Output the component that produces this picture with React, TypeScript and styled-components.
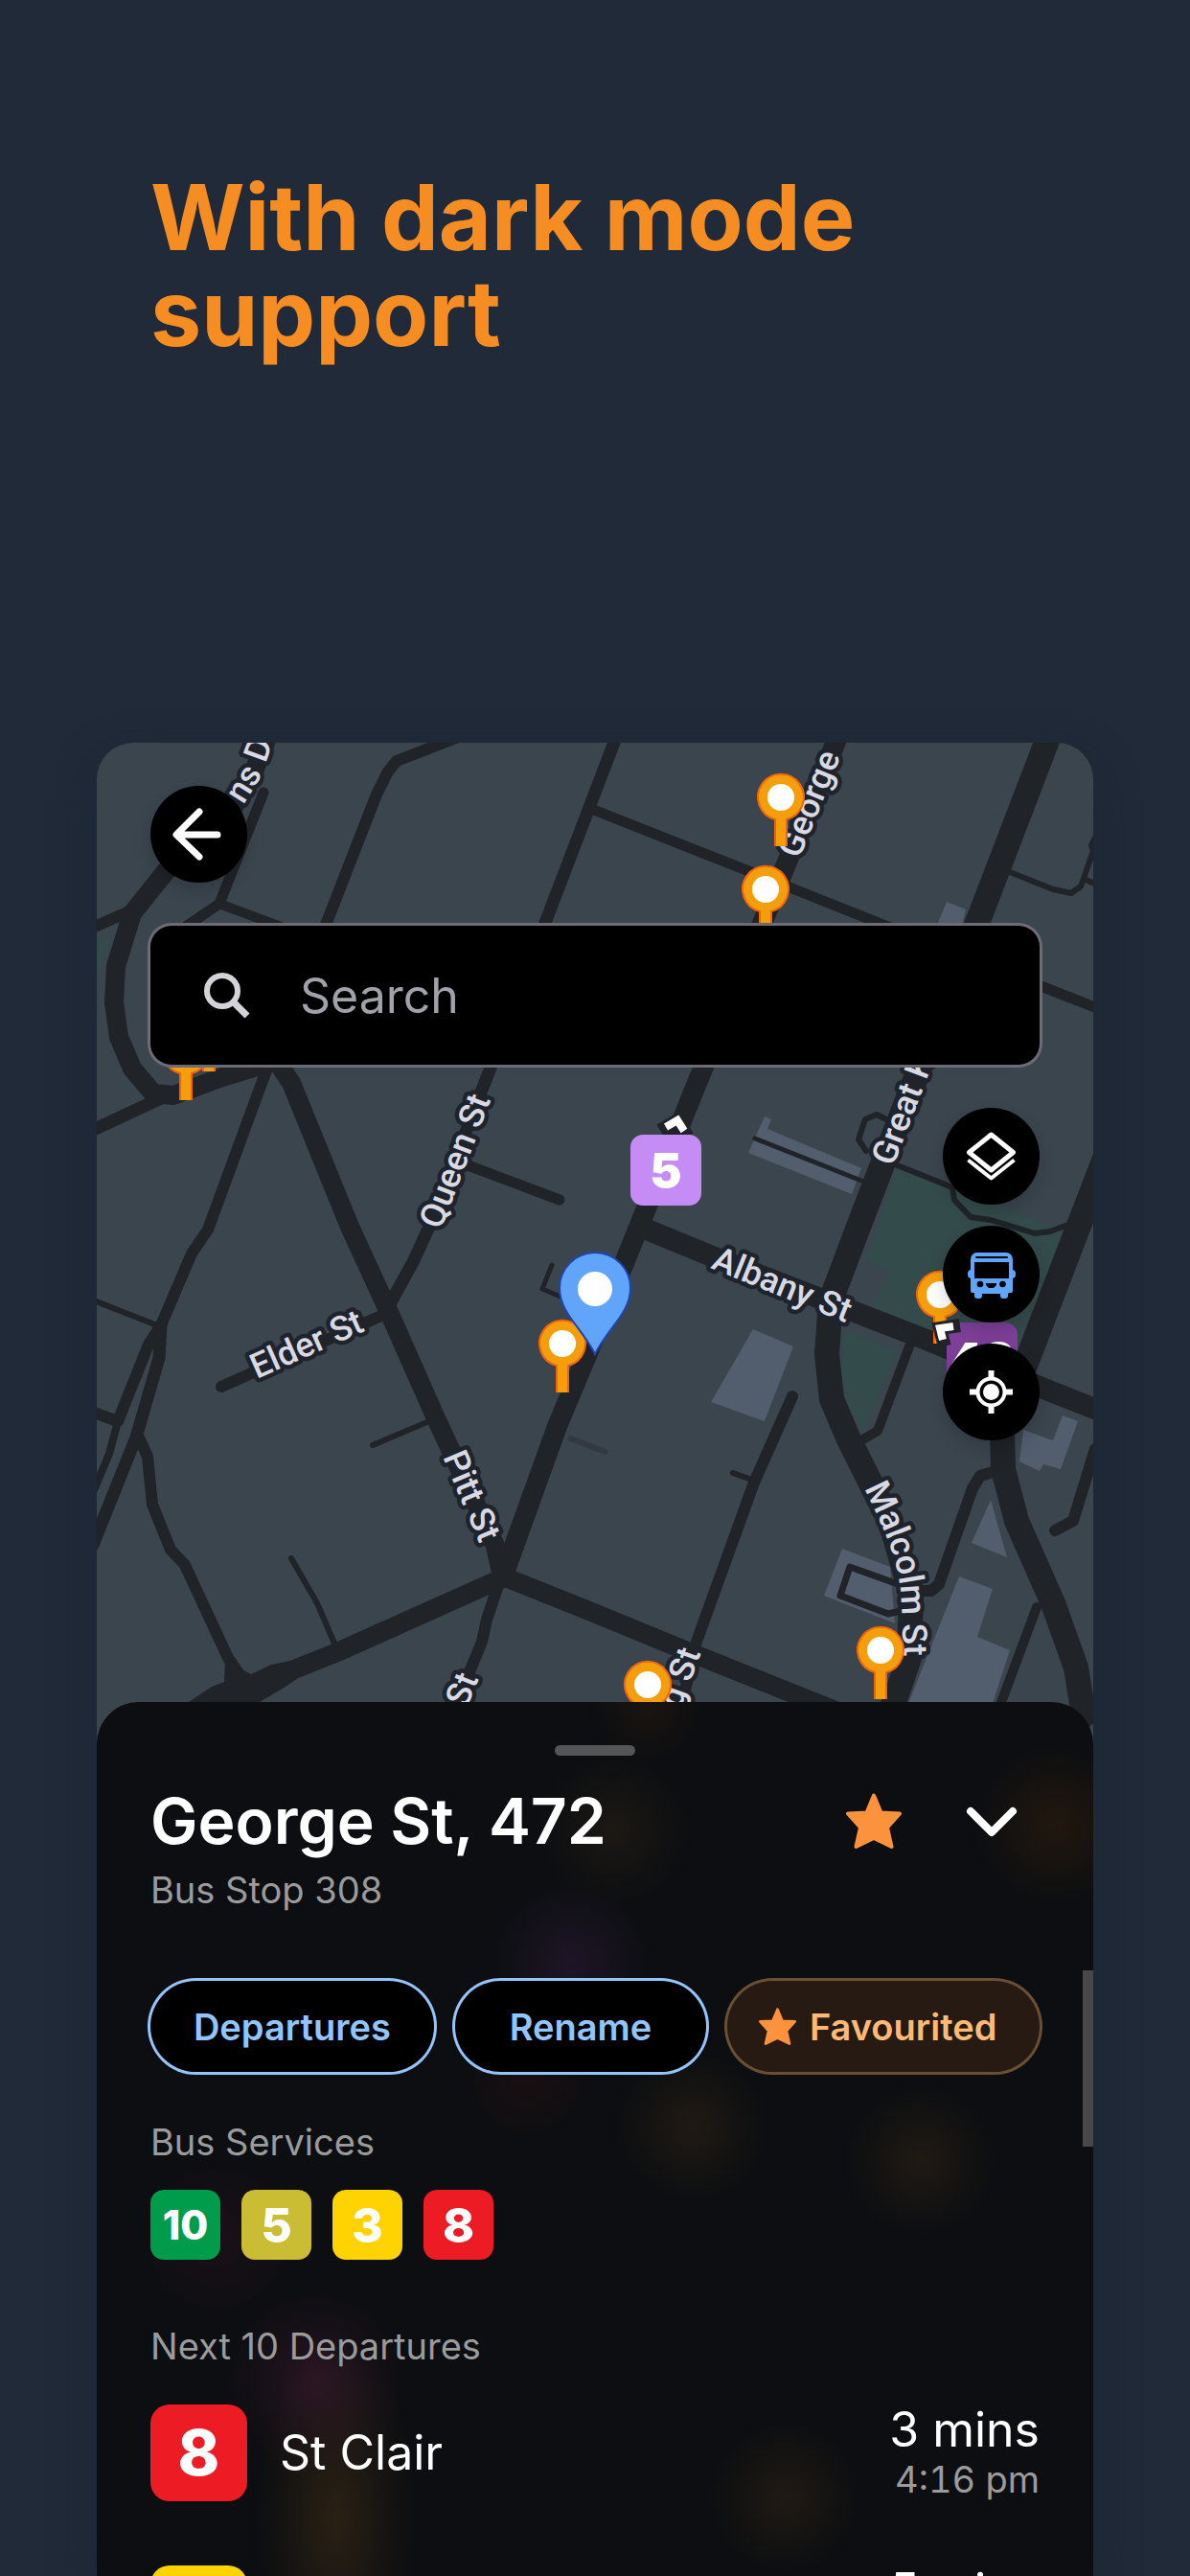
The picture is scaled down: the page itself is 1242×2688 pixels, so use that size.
import React from "react";
import styled, { createGlobalStyle } from "styled-components";

const GlobalStyle = createGlobalStyle`
  *, *::before, *::after { box-sizing: border-box; }
  body { margin: 0; background: #202a38; }
  button, input { font: inherit; color: inherit; }
  h1, h2, h3, p, ul { margin: 0; padding: 0; }
`;

const Page = styled.div`
  height: 100vh;
  overflow: hidden;
  display: flex;
  flex-direction: column;
  padding: 0 101px;
  background: #202a38;
  color: #fff;
  font-family: Inter, "Liberation Sans", sans-serif;
`;

const Hero = styled.header`
  height: 775px;
  flex: none;
  padding: 177px 56px 0;
`;

const Headline = styled.h1`
  max-width: 800px;
  font-size: 95px;
  line-height: 100px;
  font-weight: 700;
  color: #f68d22;
`;

const Card = styled.main`
  position: relative;
  flex: 1;
  min-height: 0;
  display: flex;
  flex-direction: column;
  overflow: hidden;
  border-radius: 38px 38px 0 0;
  background: #3b454e;
`;

const CardShadow = styled.div`
  flex: 1;
  min-height: 0;
  display: flex;
  flex-direction: column;
  border-radius: 38px 38px 0 0;
  box-shadow: 0 16px 48px rgba(22, 38, 50, 0.4);
`;

const MapSvg = styled.svg`
  position: absolute;
  inset: 0;
  width: 100%;
  height: 1040px;
`;

const MapControls = styled.section`
  position: relative;
  flex: none;
  height: 1001px;
  padding: 45px 56px 0;
  display: flex;
  flex-direction: column;
  align-items: flex-start;
`;

const RoundButton = styled.button`
  width: 101px;
  height: 101px;
  flex: none;
  padding: 0;
  border: 0;
  border-radius: 50%;
  background: #000;
  box-shadow: 0 8px 18px rgba(0, 0, 0, 0.16);
  svg { display: block; width: 100%; height: 100%; }
`;

const SearchBox = styled.label`
  width: 100%;
  height: 145px;
  margin-top: 45px;
  padding: 0 50px;
  display: flex;
  align-items: center;
  gap: 46px;
  border-radius: 22px;
  background: #000;
  box-shadow: 0 0 0 3px #6d6b75;
`;

const SearchInput = styled.input`
  flex: 1;
  min-width: 0;
  padding: 0;
  border: 0;
  outline: 0;
  background: transparent;
  font-size: 50px;
  line-height: 60px;
  &::placeholder { color: #a1a1aa; opacity: 1; }
`;

const Tools = styled.div`
  align-self: flex-end;
  margin-top: 45px;
  display: flex;
  flex-direction: column;
  gap: 22px;
`;

const Sheet = styled.section`
  position: relative;
  flex: 1;
  min-height: 0;
  padding: 45px 56px 0;
  border-radius: 44px 44px 0 0;
  background:
    radial-gradient(circle 100px at 228px 708px, rgba(84, 30, 62, 0.4), rgba(84, 30, 62, 0.12) 60%, transparent),
    radial-gradient(ellipse 85px 190px at 250px 850px, rgba(84, 58, 24, 0.42), rgba(84, 58, 24, 0.12) 65%, transparent),
    radial-gradient(circle 80px at 540px 133px, rgba(70, 50, 28, 0.28), transparent),
    radial-gradient(circle 85px at 1000px 128px, rgba(74, 42, 8, 0.34), transparent),
    radial-gradient(circle 85px at 495px 270px, rgba(72, 38, 88, 0.3), transparent),
    radial-gradient(circle 70px at 450px 392px, rgba(110, 20, 20, 0.14), transparent),
    radial-gradient(circle 80px at 621px 443px, rgba(70, 48, 24, 0.34), transparent),
    radial-gradient(circle 80px at 860px 478px, rgba(70, 48, 24, 0.34), transparent),
    radial-gradient(circle 80px at 718px 830px, rgba(70, 48, 24, 0.34), transparent),
    radial-gradient(circle 90px at 125px 560px, rgba(80, 24, 50, 0.22), transparent),
    radial-gradient(circle 60px at 575px 5px, rgba(60, 34, 14, 0.3), transparent),
    #0c0e11;
`;

const Handle = styled.div`
  width: 84px;
  height: 11px;
  margin: 0 auto 32px;
  border-radius: 6px;
  background: #545556;
`;

const SheetHeader = styled.header`
  display: flex;
  align-items: center;
  gap: 22px;
`;

const StopName = styled.h2`
  flex: 1;
  font-size: 66px;
  line-height: 72px;
  font-weight: 600;
  white-space: nowrap;
`;

const IconButton = styled.button`
  width: 101px;
  height: 72px;
  padding: 0;
  border: 0;
  background: transparent;
  display: grid;
  place-items: center;
`;

const Muted = styled.p<{ $top: number }>`
  margin-top: ${(p) => p.$top}px;
  font-size: 38px;
  line-height: 48px;
  font-weight: 400;
  color: #9b9b9c;
`;

const Actions = styled.div`
  display: flex;
  gap: 22px;
  margin-top: 71px;
`;

const Pill = styled.button<{ $grow: number; $active?: boolean }>`
  flex: ${(p) => p.$grow} 1 0;
  height: 95px;
  padding: ${(p) => (p.$active ? "0 12px 0 0" : "0")};
  border: 0;
  border-radius: 48px;
  display: flex;
  align-items: center;
  justify-content: center;
  gap: 14px;
  white-space: nowrap;
  font-size: 38px;
  line-height: 48px;
  font-weight: 600;
  background: ${(p) => (p.$active ? "#261a13" : "#000")};
  color: ${(p) => (p.$active ? "#fdba74" : "#93c5fd")};
  box-shadow: 0 0 0 3px ${(p) => (p.$active ? "#6b4f35" : "#93c5fd")};
`;

const Services = styled.ul`
  display: flex;
  gap: 22px;
  margin-top: 26px;
  list-style: none;
`;

const Route = styled.span<{ $color: string; $large?: boolean; $wide?: boolean }>`
  flex: none;
  width: ${(p) => (p.$large ? 101 : 73)}px;
  height: ${(p) => (p.$large ? 101 : 73)}px;
  display: grid;
  place-items: center;
  border-radius: ${(p) => (p.$large ? 20 : 14)}px;
  background: ${(p) => p.$color};
  font-size: ${(p) => (p.$large ? 66 : p.$wide ? 42 : 50)}px;
  line-height: 1;
  font-weight: 800;
`;

const Departures = styled.ul`
  display: flex;
  flex-direction: column;
  gap: 64px;
  margin-top: 35px;
  list-style: none;
`;

const Departure = styled.li`
  display: flex;
  align-items: center;
  gap: 34px;
`;

const Destination = styled.span`
  flex: 1;
  font-size: 50px;
  line-height: 56px;
`;

const Due = styled.div`
  display: flex;
  flex-direction: column;
  align-items: flex-end;
  min-height: 104px;
`;

const DueIn = styled.span`
  font-size: 50px;
  line-height: 56px;
`;

const DueAt = styled.time`
  font-size: 38px;
  line-height: 48px;
  font-variant-numeric: tabular-nums;
  color: #9b9b9c;
`;

const ScrollThumb = styled.div`
  position: absolute;
  top: 280px;
  right: 0;
  width: 11px;
  height: 184px;
  background: #484848;
`;

const RouteLabel = styled.text`
  font-family: Roboto, sans-serif;
  font-weight: 500;
  font-size: 36px;
  fill: #d9d9e4;
  stroke: #1e232c;
  stroke-width: 9px;
  stroke-linejoin: round;
  paint-order: stroke;
`;

const MarkerText = styled.text`
  font-family: Inter, sans-serif;
  font-weight: 900;
  font-size: 50px;
  fill: #fff;
  text-anchor: middle;
`;

const roads: [number, string][] = [
  [20, "M279 770 262 812 245 840 174 908 138 953 121 1008 119 1046 124 1082 138 1115 160 1141 181 1143 232 1124 285 1108"],
  [12, "M101 966 135 951"],
  [11, "M275 827 229 943 195 966"],
  [10, "M229 943 293 967"],
  [12, "M476 770 414 794 405 805 393 829 340 965"],
  [13, "M642 772 569 963 512 1114 448 1280 431 1317 405 1364"],
  [11, "M617 844 779 908 927 967 1089 1030 1145 1052"],
  [11, "M486 1215 584 1252"],
  [12, "M279 1115 275 1125 217 1283 200 1308 168 1383 155 1403 123 1483"],
  [8, "M123 1483 114 1517 98 1555"],
  [13, "M168 1383 166 1417 142 1500 97 1612"],
  [6, "M98 1357 164 1383"],
  [12, "M95 1473 123 1483"],
  [12, "M145 1500 154 1520 159 1570 178 1617 193 1633 238 1730 256 1756"],
  [20, "M270 1106 290 1109 304 1130 365 1280 405 1367 455 1480 517 1613 524 1645"],
  [13, "M95 1180 168 1146"],
  [12, "M231 1447 400 1372"],
  [6, "M389 1508 448 1483"],
  [6, "M304 1626 331 1673 350 1717"],
  [21, "M874 770 801 950 734 1114 668 1277 613 1413 582 1487 525 1645"],
  [20, "M524 1647 352 1724 307 1742 262 1760 210 1790"],
  [12, "M519 1657 508 1690 503 1713 489 1747 470 1790"],
  [20, "M525 1645 610 1679 727 1727 872 1785"],
  [5, "M576 1320 566 1345 585 1353 590 1336"],
  [26, "M1094 770 1020 963 960 1114 896 1280 867 1357 863 1413 868 1460 885 1500 930 1590 951 1663 949 1730 930 1785"],
  [6, "M1054 910 1099 928 1118 932 1128 925 1141 888 1139 882 1145 870 M1133 918 1145 923"],
  [5, "M788 1188 899 1232"],
  [6, "M925 1168 915 1163 903 1168 896 1189 904 1201"],
  [6, "M934 1215 994 1239 996 1252 1013 1270 1034 1273 1080 1287 1096 1285 1112 1279"],
  [26, "M1158 1196 1124 1284 1068 1430 1046 1493 1047 1533 1061 1587 1099 1673 1123 1740 1131 1790"],
  [22, "M668 1280 748 1313 972 1400 1092 1450 1145 1471"],
  [10, "M949 1405 916 1493 899 1503"],
  [12, "M827 1457 787 1547 727 1713 710 1785"],
  [6, "M765 1537 787 1545"],
  [7, "M937 1653 887 1635 877 1665 927 1684 940 1681"],
  [12, "M1036 1536 1023 1540 1015 1553 980 1653 972 1660 955 1660"],
  [12, "M1143 1512 1120 1587 1101 1597"],
  [10, "M1082 1677 1040 1790"],
];

const buildings = [
  "M988 941 1008 949 1003 970 976 970Z",
  "M798 1165 805 1168 801 1178 899 1219 889 1246 781 1203Z",
  "M786 1387 828 1405 798 1483 742 1463Z",
  "M879 1616 929 1635 934 1694 860 1665Z",
  "M1034 1565 1051 1625 1014 1610Z",
  "M1068 1492 1099 1503 1109 1477 1125 1483 1107 1533 1089 1528 1085 1535 1064 1525Z",
  "M1001 1645 1036 1658 1020 1708 1054 1722 1032 1790 943 1790Z",
];

const parks = [
  "M937 1215 994 1240 1112 1285 1062 1404 1000 1398 909 1364 930 1327 903 1315Z",
  "M882 1388 937 1410 901 1493 885 1470 878 1427Z",
  "M101 982 116 975 101 1022Z",
];

const labels: [string, number, number, number][] = [
  ["ns", 254, 840, -58],
  ["D", 277, 797, -70],
  ["George", 834, 897, -68],
  ["Queen St", 460, 1284, -69],
  ["Elder St", 268, 1439, -24],
  ["Pitt St", 462, 1520, 67],
  ["Albany St", 741, 1323, 22],
  ["Great King St", 932, 1218, -69],
  ["St", 487, 1783, -68],
  ["g St", 710, 1784, -70],
];

const stops = [
  [815, 832],
  [799, 928],
  [218, 1067],
  [194, 1097],
  [587, 1402],
  [981, 1351],
  [919, 1722],
  [676, 1758],
];

function Stop({ x, y }: { x: number; y: number }) {
  return (
    <g transform={`translate(${x} ${y})`}>
      <path d="M-6 51V23A24 24 0 1 1 6 23V51" fill="#f59e0b" stroke="#f0640e" strokeWidth="2" />
      <circle r="14" fill="#fff" />
    </g>
  );
}

function Heading({ d }: { d: string }) {
  return (
    <g fill="none" strokeLinejoin="miter">
      <path d={d} stroke="#202327" strokeWidth="14" strokeLinecap="square" />
      <path d={d} stroke="#fff" strokeWidth="8" />
    </g>
  );
}

function StreetMap() {
  return (
    <MapSvg viewBox="101 775 1040 1040" preserveAspectRatio="xMidYMin slice" aria-hidden="true">
      {parks.map((d) => <path key={d} d={d} fill="#344b4b" />)}
      {buildings.map((d) => <path key={d} d={d} fill="#525d6e" />)}
      <g fill="none" stroke="#202327" strokeLinecap="round" strokeLinejoin="round">
        {roads.map(([w, d]) => <path key={d} d={d} strokeWidth={w} />)}
      </g>
      <path d="M593 1500 634 1516" stroke="#323945" strokeWidth="6" />
      <path d="M235 1733 262 1747 283 1737 303 1733 310 1752 293 1763 271 1776 197 1776 221 1760 234 1755Z" fill="#202327" />
      {labels.map(([t, x, y, r]) => (
        <RouteLabel key={t} transform={`translate(${x} ${y}) rotate(${r})`}>{t}</RouteLabel>
      ))}
      <path id="malcolm" d="M902 1553 C924 1598 941 1632 941 1682 L945 1775" fill="none" />
      <RouteLabel><textPath href="#malcolm">Malcolm St</textPath></RouteLabel>
      {stops.map(([x, y]) => <Stop key={`${x}-${y}`} x={x} y={y} />)}
      <path d="M621 1413 C607 1385 584 1370 584 1344 A37 37 0 0 1 658 1344 C658 1370 635 1385 621 1413Z" fill="#60a5fa" stroke="#2145b0" strokeWidth="2" />
      <circle cx="621" cy="1345" r="18" fill="#fff" />
      <Heading d="M695 1176 707 1169 714 1180" />
      <rect x="658" y="1184" width="74" height="74" rx="13" fill="#c58cf5" />
      <MarkerText x="695" y="1239">5</MarkerText>
      <rect x="988" y="1380" width="74" height="74" rx="13" fill="#7e3f98" />
      <MarkerText x="1025" y="1437">43</MarkerText>
      <Heading d="M984 1398 981 1386 995 1384" />
    </MapSvg>
  );
}

const Star = ({ size }: { size: number }) => (
  <svg width={size} height={size} viewBox="0 0 58 58" aria-hidden="true">
    <path
      d="M29 2.500 L36.500 20.500 L56 21.500 L43 36 L47.500 56 L29 47 L10.500 56 L15 36 L2 21.500 L21.500 20.500Z"
      fill="#fb923c" stroke="#fb923c" strokeWidth="4" strokeLinejoin="round"
    />
  </svg>
);

const services = [
  { route: "10", color: "#009c4b" },
  { route: "5", color: "#cbbd33" },
  { route: "3", color: "#ffd302" },
  { route: "8", color: "#ed1c24" },
];

const departures = [
  { route: "8", color: "#ed1c24", to: "St Clair", due: "3 mins", at: "4:16 pm" },
  { route: "3", color: "#ffd302", to: "", due: "5 mins", at: "" },
];

export default function App() {
  return (
    <Page>
      <GlobalStyle />
      <Hero>
        <Headline>With dark mode support</Headline>
      </Hero>
      <CardShadow>
        <Card>
          <StreetMap />
          <MapControls>
            <RoundButton aria-label="Back">
              <svg viewBox="0 0 101 101" fill="none" stroke="#fff" strokeWidth="7" strokeLinecap="round" strokeLinejoin="round">
                <path d="M28 51H70M51 27 27 51 51 74" />
              </svg>
            </RoundButton>
            <SearchBox>
              <svg width="60" height="60" viewBox="0 0 60 60" fill="none" stroke="#d4d4d8" aria-hidden="true">
                <circle cx="25" cy="25" r="16" strokeWidth="6" />
                <path d="M36 36 51 51" strokeWidth="7" />
              </svg>
              <SearchInput type="search" placeholder="Search" aria-label="Search" />
            </SearchBox>
            <Tools>
              <RoundButton aria-label="Map layers">
                <svg viewBox="0 0 101 101" fill="none" stroke="#fff" strokeWidth="5" strokeLinejoin="round">
                  <path d="M50.500 28 73.500 46.500 50.500 65 27.500 46.500Z" />
                  <path d="M26.500 54.500 50.500 73.500 74.500 54.500" strokeWidth="4" />
                </svg>
              </RoundButton>
              <RoundButton aria-label="Show buses">
                <svg viewBox="0 0 101 101" fill="#60a5fa">
                  <rect x="29" y="28" width="44" height="43" rx="7" />
                  <rect x="26" y="46" width="50" height="9" rx="4" />
                  <rect x="29" y="58" width="44" height="12" rx="2" />
                  <rect x="33" y="66" width="8" height="10" rx="3" />
                  <rect x="60" y="66" width="8" height="10" rx="3" />
                  <g fill="#000">
                    <rect x="34" y="32" width="34" height="2" rx="1" />
                    <rect x="33" y="38" width="36" height="17" />
                    <circle cx="39" cy="61" r="3.300" />
                    <circle cx="62.500" cy="61" r="3.300" />
                    <path d="M45 60H56V62L53 65H48L45 62Z" />
                  </g>
                </svg>
              </RoundButton>
              <RoundButton aria-label="My location">
                <svg viewBox="0 0 101 101" fill="none" stroke="#fff">
                  <circle cx="50.500" cy="50.500" r="14" strokeWidth="4" />
                  <circle cx="50.500" cy="50.500" r="8.500" fill="#fff" stroke="none" />
                  <path d="M50.500 28V36M50.500 65V73M28 50.500H36M65 50.500H73" strokeWidth="6" />
                </svg>
              </RoundButton>
            </Tools>
          </MapControls>
          <Sheet>
            <Handle />
            <SheetHeader>
              <StopName>George St, 472</StopName>
              <IconButton aria-label="Remove favourite"><Star size={58} /></IconButton>
              <IconButton aria-label="Collapse">
                <svg width="60" height="40" viewBox="0 0 60 40" fill="none" stroke="#fff" strokeWidth="8" strokeLinecap="round" strokeLinejoin="round">
                  <path d="M8 10 30 32 52 10" />
                </svg>
              </IconButton>
            </SheetHeader>
            <Muted $top={12}>Bus Stop 308</Muted>
            <Actions>
              <Pill $grow={295}>Departures</Pill>
              <Pill $grow={262}>Rename</Pill>
              <Pill $grow={313} $active><Star size={39} />Favourited</Pill>
            </Actions>
            <Muted as="h3" $top={49}>Bus Services</Muted>
            <Services>
              {services.map((s) => (
                <li key={s.route}><Route $color={s.color} $wide={s.route.length > 1}>{s.route}</Route></li>
              ))}
            </Services>
            <Muted as="h3" $top={66}>Next 10 Departures</Muted>
            <Departures>
              {departures.map((d) => (
                <Departure key={d.due}>
                  <Route $color={d.color} $large>{d.route}</Route>
                  <Destination>{d.to}</Destination>
                  <Due>
                    <DueIn>{d.due}</DueIn>
                    {d.at && <DueAt>{d.at}</DueAt>}
                  </Due>
                </Departure>
              ))}
            </Departures>
            <ScrollThumb />
          </Sheet>
        </Card>
      </CardShadow>
    </Page>
  );
}
